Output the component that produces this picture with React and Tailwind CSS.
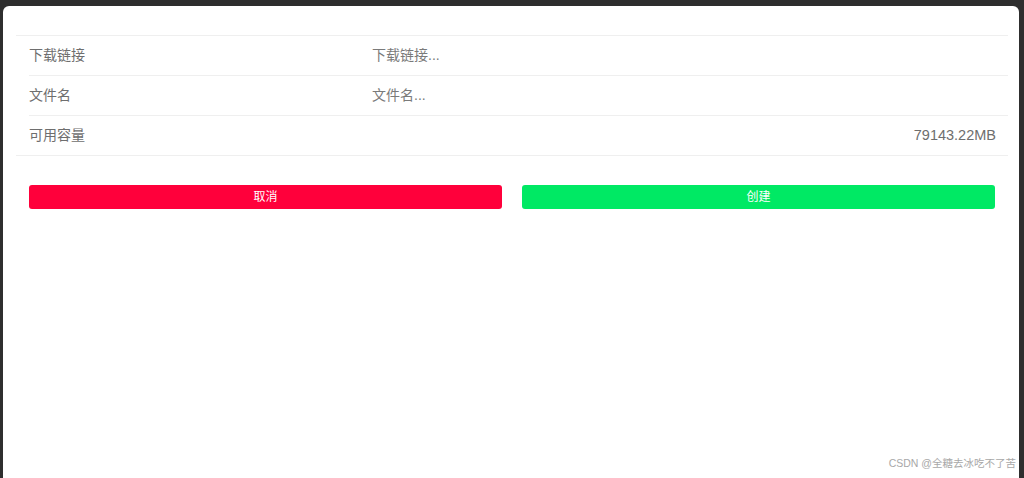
import React from 'react';

const font = { fontFamily: '"Liberation Sans", "Noto Sans CJK SC", sans-serif' };

const rows = [
  { label: '下载链接', placeholder: '下载链接...' },
  { label: '文件名', placeholder: '文件名...' },
];

const App = () => {
  return (
    <div className="relative flex min-h-screen bg-[#2e2e2e] pt-[6px] pl-[3px] pr-[5px]" style={font}>
      <div className="flex-1 min-h-[472px] rounded-t-[6px] bg-white pt-[29px] pl-[13px] pr-[11px]">
        <div className="border-y border-[#efefef]">
          {rows.map((row) => (
            <div key={row.label} className="pl-[13px]">
              <div className="flex h-[40px] items-center border-b border-[#efefef] pr-[12px]">
                <span className="w-[343px] shrink-0 text-[14px] text-[#6e6e6e]">{row.label}</span>
                <input
                  className="flex-1 bg-transparent text-[14px] text-[#333] outline-none placeholder:text-[#7a7a7a]"
                  placeholder={row.placeholder}
                />
              </div>
            </div>
          ))}
          <div className="pl-[13px]">
            <div className="flex h-[39px] items-center justify-between pr-[12px]">
              <span className="text-[14px] text-[#6e6e6e]">可用容量</span>
              <span className="text-[14.5px] text-[#6e6e6e]">79143.22MB</span>
            </div>
          </div>
        </div>

        <div className="mt-[29px] flex gap-[20px] px-[13px]">
          <button className="h-[24px] flex-1 rounded-[3px] bg-[#ff003b] text-[12px] text-white">取消</button>
          <button className="h-[24px] flex-1 rounded-[3px] bg-[#00e964] text-[12px] text-white">创建</button>
        </div>
      </div>

      <span className="absolute bottom-[6px] right-[8px] text-[10.5px] text-[#a8a8a8]">CSDN @全糖去冰吃不了苦</span>
    </div>
  );
};

export default App;
